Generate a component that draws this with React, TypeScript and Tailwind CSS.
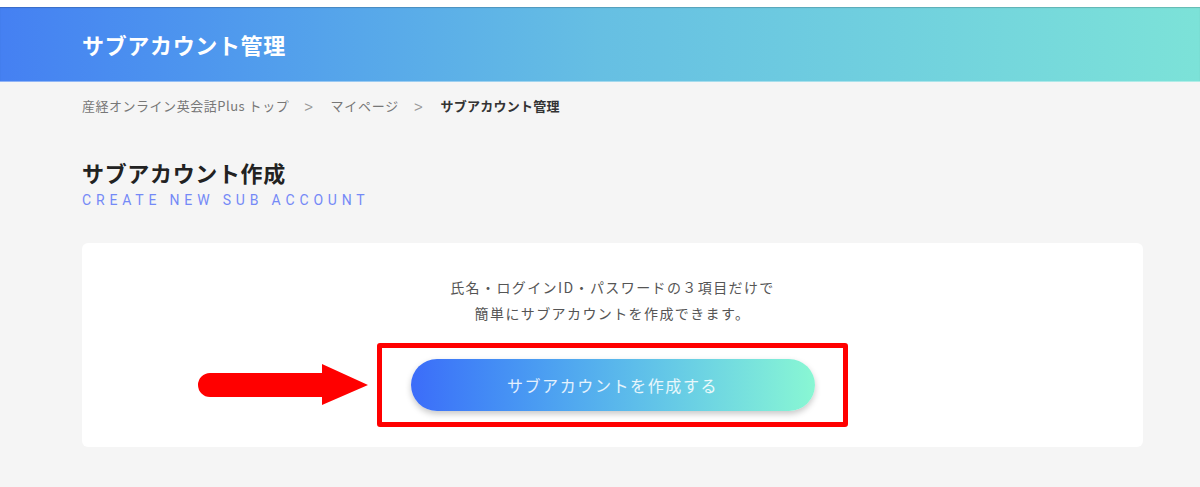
export default function App() {
  return (
    <div className="w-[1200px] h-[487px] overflow-hidden bg-[#f5f5f5] font-['Noto_Sans_CJK_JP','Noto_Sans',sans-serif]">
      <div className="h-[7px] bg-white" />
      <header className="h-[75px] flex items-center pl-[82px] bg-gradient-to-r from-[#4580f2] via-[#66bfe3] to-[#7ce2d8] border-b border-white/40 shadow-[inset_0_1px_1px_rgba(0,0,0,0.18)]">
        <h1 className="text-[22px] font-bold tracking-[0.03em] text-white leading-none">
          サブアカウント管理
        </h1>
      </header>

      {/* breadcrumb */}
      <nav className="mt-[14px] pl-[82px] flex items-center h-[20px] text-[13px] tracking-[0.04em] text-[#777]">
        <span>産経オンライン英会話Plus トップ</span>
        <span className="ml-[15px] mr-[17px] text-[15px] leading-none text-[#999] font-['Liberation_Sans',sans-serif]">&gt;</span>
        <span className="tracking-[0.06em]">マイページ</span>
        <span className="ml-[15px] mr-[17px] text-[15px] leading-none text-[#999] font-['Liberation_Sans',sans-serif]">&gt;</span>
        <span className="font-bold text-[#333] tracking-[0.02em]">サブアカウント管理</span>
      </nav>

      <div className="pl-[82px] mt-[40px]">
        <h2 className="text-[22px] leading-[32px] font-bold tracking-[0.03em] text-[#222]">
          サブアカウント作成
        </h2>
        <p className="mt-[2px] h-[20px] leading-[20px] text-[14px] tracking-[0.345em] text-[#7489f7] font-['Roboto',sans-serif]">
          CREATE NEW SUB ACCOUNT
        </p>
      </div>

      <div className="relative ml-[82px] mt-[33px] w-[1061px] h-[204px] rounded-[6px] bg-white pt-[31px] flex flex-col items-center">
        <p className="text-[14px] leading-[26px] tracking-[0.1em] text-[#555] text-center">
          氏名・ログインID・パスワードの３項目だけで
          <br />
          簡単にサブアカウントを作成できます。
        </p>

        <div className="mt-[17px] w-[471px] h-[84px] border-[5px] border-[#ff0000] rounded-[3px] flex items-center justify-center">
          <button className="w-[404px] h-[52px] rounded-full bg-gradient-to-r from-[#3c6cf9] to-[#89f7d3] shadow-[0_3px_6px_rgba(0,0,0,0.22)] text-[16px] tracking-[0.1em] text-white/85">
            サブアカウントを作成する
          </button>
        </div>

        {/* annotation arrow */}
        <svg
          className="absolute left-[116px] top-[121px]"
          width="170"
          height="41"
          viewBox="0 0 170 41"
        >
          <path d="M12 9 H124 V0 L170 21 L124 41 V33 H12 A12 12 0 0 1 12 9 Z" fill="#ff0000" />
        </svg>
      </div>
    </div>
  );
}
